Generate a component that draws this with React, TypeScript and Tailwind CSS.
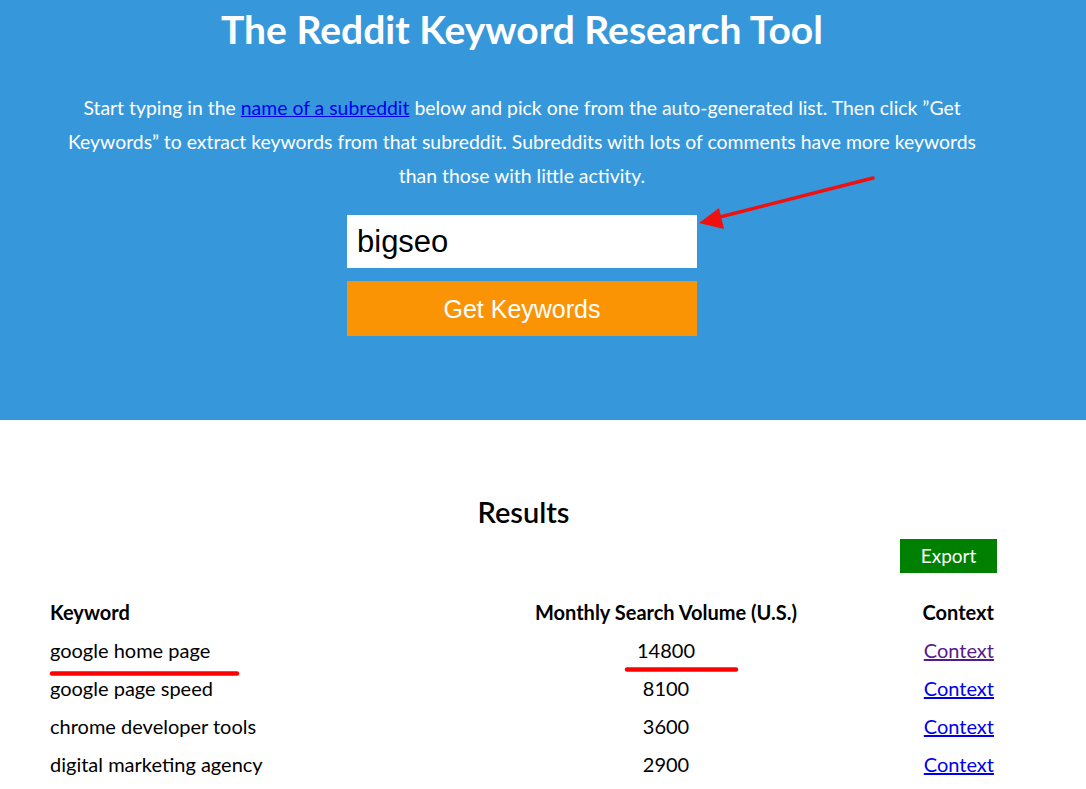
const rows = [
  { keyword: "google home page", volume: "14800", visited: true },
  { keyword: "google page speed", volume: "8100", visited: false },
  { keyword: "chrome developer tools", volume: "3600", visited: false },
  { keyword: "digital marketing agency", volume: "2900", visited: false },
]

export default function App() {
  return (
    <div className="relative min-h-screen bg-white text-black" style={{ fontFamily: "Lato, 'Noto Sans', sans-serif" }}>
      <section className="h-[420px] bg-[#3698db] text-white">
        <div className="w-[1044px]">
          <h1 className="pt-[4px] text-center text-[39px] font-bold leading-[50px]">
            The Reddit Keyword Research Tool
          </h1>
          <p className="mx-auto mt-[37px] w-[918px] text-center text-[19.4px] leading-[34px]">
            Start typing in the{" "}
            <a href="#" className="text-[#0000ee] underline">
              name of a subreddit
            </a>{" "}
            below and pick one from the auto-generated list. Then click ”Get Keywords” to extract keywords from that
            subreddit. Subreddits with lots of comments have more keywords than those with little activity.
          </p>
          <div className="mx-auto mt-[22px] flex w-[350px] flex-col gap-[13px]">
            <input
              defaultValue="bigseo"
              className="h-[53px] w-full bg-white px-[10px] text-[31px] text-black outline-none"
              style={{ fontFamily: "'Liberation Sans', Arial, sans-serif" }}
            />
            <button
              className="h-[55px] w-full bg-[#fa9405] pt-[3px] text-[25px] text-white"
              style={{ fontFamily: "'Liberation Sans', Arial, sans-serif" }}
            >
              Get Keywords
            </button>
          </div>
        </div>
      </section>

      <section className="ml-[50px] w-[947px] pt-[72px]">
        <h2 className="text-center text-[29px] font-semibold leading-[40px]">Results</h2>
        <div className="mt-[7px] flex justify-end">
          <button className="h-[34px] w-[97px] bg-[#008000] text-[19px] text-white">Export</button>
        </div>
        <div className="mt-[20px] grid grid-cols-[440px_352px_1fr] text-[20px] leading-[38px]">
          <div className="font-bold">Keyword</div>
          <div className="text-center font-bold">Monthly Search Volume (U.S.)</div>
          <div className="pr-[3px] text-right font-bold">Context</div>
          {rows.map((r) => (
            <div key={r.keyword} className="contents">
              <div>{r.keyword}</div>
              <div className="text-center">{r.volume}</div>
              <div className="pr-[3px] text-right">
                <a href="#" className={r.visited ? "text-[#551a8b] underline" : "text-[#0000ee] underline"}>
                  Context
                </a>
              </div>
            </div>
          ))}
        </div>
      </section>

      <svg className="pointer-events-none absolute left-0 top-0" width="1086" height="789">
        <line x1="873" y1="178" x2="716" y2="218" stroke="#f01010" strokeWidth="3.5" strokeLinecap="round" />
        <polygon points="699,223 719,208 724,229" fill="#f01010" />
        <line x1="52" y1="673.5" x2="237" y2="673.5" stroke="#ff0000" strokeWidth="4.5" strokeLinecap="round" />
        <line x1="627" y1="669.5" x2="736" y2="669.5" stroke="#ff0000" strokeWidth="4.5" strokeLinecap="round" />
      </svg>
    </div>
  )
}
